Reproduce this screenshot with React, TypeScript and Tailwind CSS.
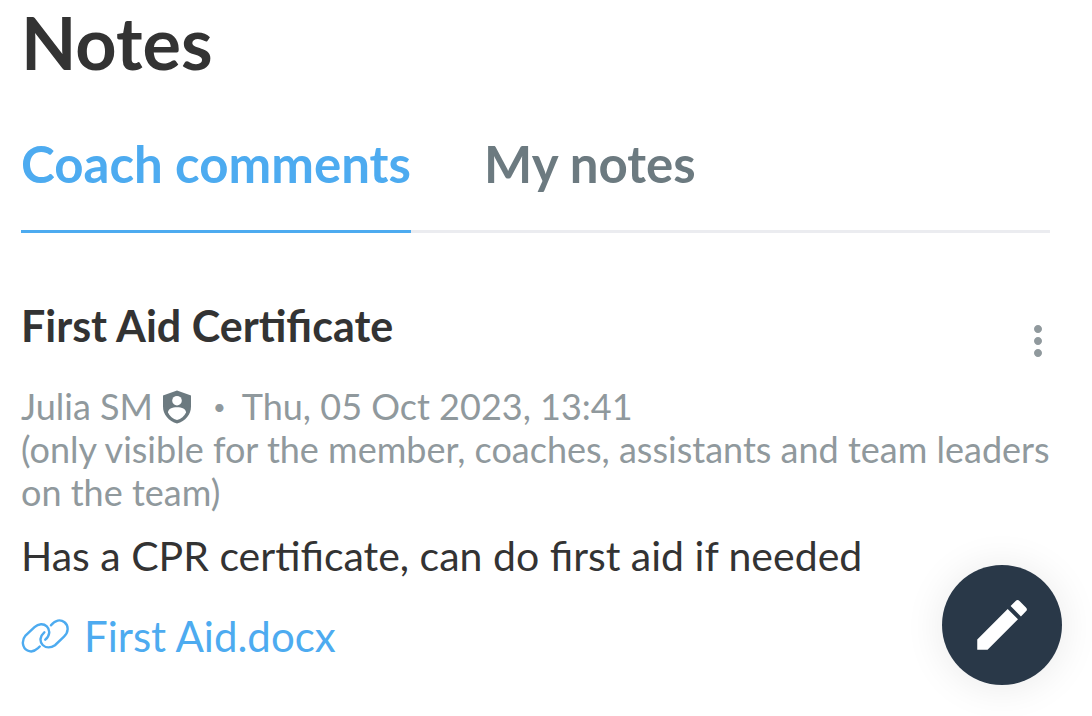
import { MdEdit, MdMoreVert } from "react-icons/md";

const note = {
  title: "First Aid Certificate",
  author: "Julia SM",
  date: "Thu, 05 Oct 2023, 13:41",
  visibility:
    "(only visible for the member, coaches, assistants and team leaders on the team)",
  text: "Has a CPR certificate, can do first aid if needed",
  file: "First Aid.docx",
};

function ShieldIcon() {
  return (
    <svg viewBox="0 0 28 34" className="mx-2.5 h-[34px] w-7 shrink-0" role="img" aria-label="Coach">
      <path
        d="M14 0.500 28 5.500v11c0 8-5.500 14.500-14 17C5.500 31 0 24.500 0 16.500v-11Z"
        fill="#6c7a80"
      />
      <circle cx="14" cy="10.700" r="4.800" fill="white" />
      <path
        d="M5 22.500c0-3.500 4-5.200 9-5.200s9 1.700 9 5.200c-1.500 3.500-5 6.500-9 7.500-4-1-7.500-4-9-7.500Z"
        fill="white"
      />
    </svg>
  );
}

function LinkIcon() {
  return (
    <svg
      viewBox="0 0 48 36"
      className="h-9 w-12 shrink-0"
      fill="none"
      stroke="currentColor"
      strokeWidth="2.400"
      strokeLinecap="round"
      aria-hidden="true"
    >
      <path d="M18.700 28.500 17 30.200C14 33 10 34.300 6.500 32.500 1.200 29.800 0.300 22.500 4.500 17.500L13.500 9.200C17.500 5.600 22.500 5.300 25.800 8.400 29.500 12 29 17.500 24.300 21.700" />
      <path d="M23.300 14.300C19 18 18.200 23.500 21.700 27 25 30.200 30 30 34 27.200L43 18.700C47.500 14.500 48 8 43.500 4.300 39.500 1 34 2 30 7.300" />
    </svg>
  );
}

export default function App() {
  return (
    <main className="min-h-screen bg-white pr-[42px] pb-10 pl-[21px] font-['Lato',sans-serif] text-[#333333]">
      <h1 className="pt-0.5 text-[72px] leading-[80px] font-bold">Notes</h1>

      <nav className="mt-[38px] flex gap-[73px] border-b-[3px] border-[#ebecf0] text-[51px] leading-[88px] font-bold">
        <button className="-mb-[3px] border-b-[3px] border-[#4dabf0] pb-[22px] text-[#4dabf0]">
          Coach comments
        </button>
        <button className="-mb-[3px] border-b-[3px] border-transparent pb-[22px] text-[#6c7a80]">
          My notes
        </button>
      </nav>

      <article className="pt-[65px]">
        <div className="flex items-start justify-between">
          <h2 className="text-[43px] leading-[56px] font-bold">{note.title}</h2>
          <button aria-label="More options" className="-mr-3 pt-[19px] text-[#90999d]">
            <MdMoreVert size={48} />
          </button>
        </div>
        <div className="-mr-4 mt-5 text-[36px] leading-[43px] text-[#90999d]">
          <div className="flex items-center">
            {note.author}
            <ShieldIcon />
            <span className="mr-4 ml-3 text-[22px]">•</span>
            <time>{note.date}</time>
          </div>
          <p>{note.visibility}</p>
        </div>
        <p className="mt-[14px] text-[41px] leading-[56px]">{note.text}</p>
        <a href="#" className="mt-6 flex items-center gap-[15px] text-[42px] leading-[56px] text-[#4dabf0]">
          <LinkIcon />
          {note.file}
        </a>
      </article>

      <button
        aria-label="Edit note"
        className="fixed right-[30px] bottom-[31px] flex size-[120px] items-center justify-center rounded-full bg-[#293848] text-white shadow-[0_2px_40px_rgba(0,0,0,0.09)]"
      >
        <MdEdit size={66} />
      </button>
    </main>
  );
}
